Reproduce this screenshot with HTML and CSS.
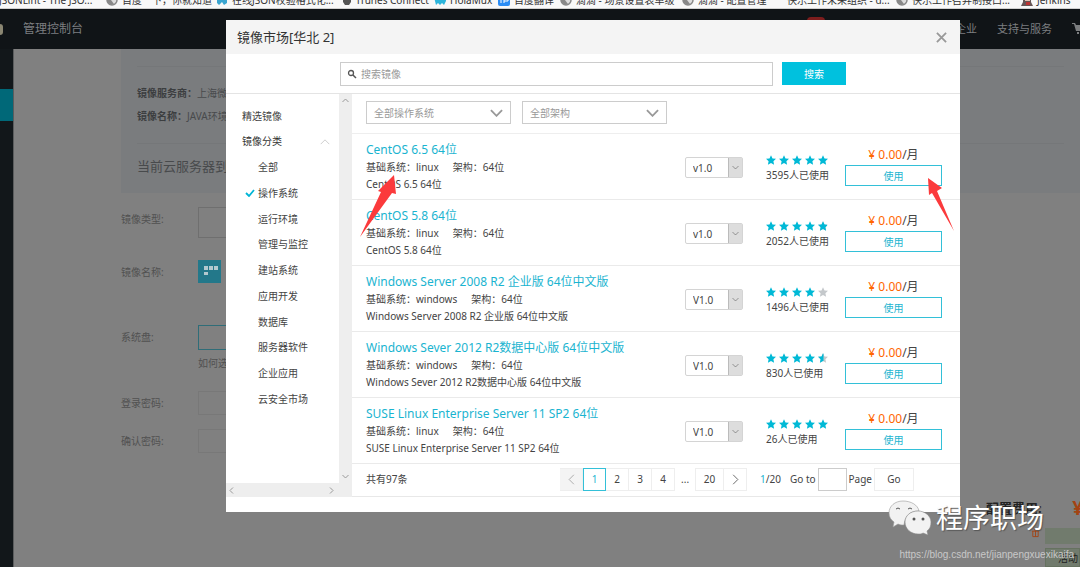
FILE: index.html
```html
<!DOCTYPE html>
<html lang="zh-CN">
<head>
<meta charset="utf-8">
<title>镜像市场</title>
<link rel="stylesheet" href="styles.css">
</head>
<body>
<svg class="defs" aria-hidden="true">
  <symbol id="star" viewBox="0 0 10 10"><path d="M5 .2 6.500 3.400 10 3.800 7.400 6.200 8.100 9.800 5 8 1.900 9.800 2.600 6.200 0 3.800 3.500 3.400Z"/></symbol>
  <symbol id="starhalf" viewBox="0 0 10 10"><path fill="#c4c8cb" d="M5 .2 6.500 3.400 10 3.800 7.400 6.200 8.100 9.800 5 8 1.900 9.800 2.600 6.200 0 3.800 3.500 3.400Z"/><path d="M5.500 1V8.300L5 8 1.900 9.800 2.600 6.200 0 3.800 3.500 3.400 5 .2Z"/></symbol>
  <symbol id="starmost" viewBox="0 0 10 10"><path fill="#c4c8cb" d="M5 .2 6.500 3.400 10 3.800 7.400 6.200 8.100 9.800 5 8 1.900 9.800 2.600 6.200 0 3.800 3.500 3.400Z"/><path d="M5 .2 6.500 3.400 9 3.700V4.700L7.400 6.200 8.100 9.800 5 8 1.900 9.800 2.600 6.200 0 3.800 3.500 3.400Z"/></symbol>
  <symbol id="globe" viewBox="0 0 12 12"><circle cx="6" cy="6" r="5" fill="#ddd" stroke="#888" stroke-width="1.500"/><path fill="#888" d="M1 5l4 1 3 4-3 1-4-3zM6 1l4 2v3L7 5z"/></symbol>
  <symbol id="chev" viewBox="0 0 14 8"><path d="M1 1 7 7 13 1" fill="none" stroke="currentColor"/></symbol>
</svg>

<nav class="bookmarks" aria-label="书签">
  <a href="#" style="left:-1px">JSONLint - The JSO...</a>
  <a href="#" style="left:106px"><svg><use href="#globe"/></svg>百度一下，你就知道</a>
  <a href="#" style="left:216px"><svg viewBox="0 0 12 12"><path fill="#3aa5d0" d="M1 3h4l1 3 1-3h4v6l-3 2-2-3-3 3-2-2z"/></svg>在线JSON校验格式化...</a>
  <a href="#" style="left:341px"><svg viewBox="0 0 12 12"><path fill="#555" d="M2 3h8v5l-2 3H4L2 8z"/></svg>iTunes Connect</a>
  <a href="#" style="left:434px"><svg viewBox="0 0 12 12"><path fill="#2cb5dc" d="M0 3h12v4l-2 4-2-2-2 2-2-2-2 2z"/></svg>HolaMux</a>
  <a href="#" style="left:498px"><svg viewBox="0 0 12 12"><rect width="12" height="12" rx="2" fill="#2b8df5"/><path d="M3 4v5M6 9V4h4v3H6" fill="none" stroke="#fff"/></svg>百度翻译</a>
  <a href="#" style="left:560px"><svg><use href="#globe"/></svg>滴滴 - 场景设置表单级</a>
  <a href="#" style="left:682px"><svg><use href="#globe"/></svg>滴滴 - 配置管理</a>
  <a href="#" style="left:787px">快乐工作未来组织 - d...</a>
  <a href="#" style="left:896px"><svg><use href="#globe"/></svg>快乐工作召弄制接口...</a>
  <a href="#" style="left:1021px"><svg viewBox="0 0 12 12"><path fill="#655" d="M2 1h8v7l2 4H0l2-4z"/><path fill="#e6c5b5" d="M4 2h5v5H4z"/><path fill="#b33" d="M5 8h4v3H5z"/></svg>Jenkins</a>
</nav>

<header class="topbar">
  <span class="logo"></span>
  <a href="#" class="console">管理控制台</a>
  <span class="hot"></span>
  <a href="#">企业</a>
  <a href="#">支持与服务</a>
  <svg class="cart" viewBox="0 0 14 12"><path fill="currentColor" d="M0 0h3l1 2h10l-2 6H4L2 1H0zM5 9h2v2H5zM10 9h2v2h-2z"/></svg>
</header>

<div class="shell">
  <aside class="rail"><span></span></aside>
  <main class="page">
    <section class="notice">
      <p><b>镜像服务商：</b>上海微科软件</p>
      <p><b>镜像名称：</b>JAVA环境镜像</p>
      <h2>当前云服务器到期时间</h2>
    </section>
    <form class="form">
      <label class="f1">镜像类型:<input type="text"></label>
      <div class="f2"><span>镜像名称:</span><i class="tile"><svg viewBox="0 0 14 10"><path fill="currentColor" d="M0 0h4v4H0zM0 6h4v3H0zM5 0h4v4H5zM10 0h4v4h-4z"/></svg></i></div>
      <label class="f3">系统盘:<input type="text"></label>
      <p class="hint">如何选择</p>
      <label class="f4">登录密码:<input type="password"></label>
      <label class="f4">确认密码:<input type="password"></label>
    </form>
  </main>
</div>

<aside class="cost">
  <div class="cost-line"><b>配置费用:</b><strong>¥</strong></div>
  <div class="cost-gift"><svg viewBox="0 0 10 10"><path fill="none" stroke="currentColor" d="M1 3h8M2 3v6h6V3M5 3v6M3 0l2 3 2-3"/></svg><span></span></div>
  <div class="cost-tip">活动</div>
</aside>

<section class="dialog" role="dialog" aria-labelledby="dlg">
  <header class="dialog-head">
    <h1 id="dlg">镜像市场[华北 2]</h1>
    <button type="button" aria-label="关闭"><svg viewBox="0 0 12 12"><path d="M1 1l10 10M11 1 1 11" fill="none" stroke="currentColor" stroke-width="2"/></svg></button>
  </header>
  <form class="search">
    <label class="searchbox">
      <svg viewBox="0 0 10 10"><circle cx="4" cy="4" r="2.500" fill="none" stroke="#555" stroke-width="1.300"/><path d="M6 6l3 3" stroke="#555" stroke-width="1.500"/></svg>
      <input type="text" placeholder="搜索镜像" aria-label="搜索镜像">
    </label>
    <button type="button">搜索</button>
  </form>
  <div class="body">
    <nav class="cats">
      <div class="cat-list">
        <a href="#">精选镜像</a>
        <a href="#" class="group">镜像分类<svg><use href="#chev"/></svg></a>
        <a href="#" class="sub">全部</a>
        <a href="#" class="sub on"><svg viewBox="0 0 10 8"><path d="M1 4l3 3 5-6" fill="none" stroke="#00b5d6" stroke-width="1.800"/></svg>操作系统</a>
        <a href="#" class="sub">运行环境</a>
        <a href="#" class="sub">管理与监控</a>
        <a href="#" class="sub">建站系统</a>
        <a href="#" class="sub">应用开发</a>
        <a href="#" class="sub">数据库</a>
        <a href="#" class="sub">服务器软件</a>
        <a href="#" class="sub">企业应用</a>
        <a href="#" class="sub">云安全市场</a>
      </div>
      <div class="vbar"><svg class="up"><use href="#chev"/></svg><svg><use href="#chev"/></svg></div>
      <div class="hbar"><svg class="left"><use href="#chev"/></svg><svg class="right"><use href="#chev"/></svg></div>
    </nav>
    <div class="main">
      <div class="filters">
        <span class="pick"><select aria-label="操作系统"><option>全部操作系统</option></select><svg><use href="#chev"/></svg></span>
        <span class="pick"><select aria-label="架构"><option>全部架构</option></select><svg><use href="#chev"/></svg></span>
      </div>
      <article class="row">
        <div class="info"><a href="#">CentOS 6.5 64位</a><p><span>基础系统：linux</span><span>架构：64位</span></p><p>CentOS 6.5 64位</p></div>
        <span class="ver"><select aria-label="版本"><option>v1.0</option></select><i><svg><use href="#chev"/></svg></i></span>
        <div class="rate"><div><svg><use href="#star"/></svg><svg><use href="#star"/></svg><svg><use href="#star"/></svg><svg><use href="#star"/></svg><svg><use href="#star"/></svg></div>3595人已使用</div>
        <div class="buy"><p><b>¥ 0.00</b>/月</p><button type="button">使用</button></div>
      </article>
      <article class="row">
        <div class="info"><a href="#">CentOS 5.8 64位</a><p><span>基础系统：linux</span><span>架构：64位</span></p><p>CentOS 5.8 64位</p></div>
        <span class="ver"><select aria-label="版本"><option>v1.0</option></select><i><svg><use href="#chev"/></svg></i></span>
        <div class="rate"><div><svg><use href="#star"/></svg><svg><use href="#star"/></svg><svg><use href="#star"/></svg><svg><use href="#star"/></svg><svg><use href="#starmost"/></svg></div>2052人已使用</div>
        <div class="buy"><p><b>¥ 0.00</b>/月</p><button type="button">使用</button></div>
      </article>
      <article class="row">
        <div class="info"><a href="#">Windows Server 2008 R2 企业版 64位中文版</a><p><span>基础系统：windows</span><span>架构：64位</span></p><p>Windows Server 2008 R2 企业版 64位中文版</p></div>
        <span class="ver"><select aria-label="版本"><option>V1.0</option></select><i><svg><use href="#chev"/></svg></i></span>
        <div class="rate"><div><svg><use href="#star"/></svg><svg><use href="#star"/></svg><svg><use href="#star"/></svg><svg><use href="#star"/></svg><svg class="off"><use href="#star"/></svg></div>1496人已使用</div>
        <div class="buy"><p><b>¥ 0.00</b>/月</p><button type="button">使用</button></div>
      </article>
      <article class="row">
        <div class="info"><a href="#">Windows Sever 2012 R2数据中心版 64位中文版</a><p><span>基础系统：windows</span><span>架构：64位</span></p><p>Windows Sever 2012 R2数据中心版 64位中文版</p></div>
        <span class="ver"><select aria-label="版本"><option>V1.0</option></select><i><svg><use href="#chev"/></svg></i></span>
        <div class="rate"><div><svg><use href="#star"/></svg><svg><use href="#star"/></svg><svg><use href="#star"/></svg><svg><use href="#star"/></svg><svg><use href="#starhalf"/></svg></div>830人已使用</div>
        <div class="buy"><p><b>¥ 0.00</b>/月</p><button type="button">使用</button></div>
      </article>
      <article class="row">
        <div class="info"><a href="#">SUSE Linux Enterprise Server 11 SP2 64位</a><p><span>基础系统：linux</span><span>架构：64位</span></p><p>SUSE Linux Enterprise Server 11 SP2 64位</p></div>
        <span class="ver"><select aria-label="版本"><option>V1.0</option></select><i><svg><use href="#chev"/></svg></i></span>
        <div class="rate"><div><svg><use href="#star"/></svg><svg><use href="#star"/></svg><svg><use href="#star"/></svg><svg><use href="#star"/></svg><svg><use href="#star"/></svg></div>26人已使用</div>
        <div class="buy"><p><b>¥ 0.00</b>/月</p><button type="button">使用</button></div>
      </article>
      <footer class="pager">
        <span class="total">共有97条</span>
        <button type="button" class="prev" aria-label="上一页"><svg class="left"><use href="#chev"/></svg></button>
        <button type="button" class="cur">1</button>
        <button type="button">2</button>
        <button type="button">3</button>
        <button type="button">4</button>
        <span class="dots">...</span>
        <button type="button" class="last">20</button>
        <button type="button" aria-label="下一页"><svg class="right"><use href="#chev"/></svg></button>
        <span class="count"><b>1</b>/20</span>
        <label class="goto">Go to<input type="text">Page</label>
        <button type="button" class="go">Go</button>
      </footer>
    </div>
  </div>
</section>

<svg class="arrow arrow-a" viewBox="0 0 36 64"><path fill="#fb3a3c" d="M0 63 21 18 18 17 34 1 36 20 32 19Z"/></svg>
<svg class="arrow arrow-b" viewBox="0 0 28 54"><path fill="#fb3a3c" d="M26 53 9 13 14 10 0 0 1 17 4 15Z"/></svg>

<div class="mark">
  <svg viewBox="0 0 44 36">
    <path fill="#f2f2f2" stroke="#999" stroke-width=".6" d="M15 1C7 1 1 6 1 13c0 4 2 7 5 9l-1 5 5-3c2 1 4 1 6 1C17 16 22 11 31 11 30 5 23 1 15 1Z"/>
    <path fill="#f2f2f2" stroke="#888" stroke-width=".6" d="M30 11c-8 0-13 5-13 11 0 7 6 12 13 12 2 0 4 0 5-1l5 2-1-4c3-2 4-5 4-9 0-6-6-11-13-11Z"/>
    <path fill="none" stroke="#555" d="M8 9q2-2 4 0M20 9q2-2 4 0"/>
    <circle cx="26" cy="19" r="1.500" fill="#555"/><circle cx="35" cy="19" r="1.500" fill="#555"/>
  </svg>
  <span>程序职场</span>
</div>
<div class="url">https://blog.csdn.net/jianpengxuexikaifa</div>
</body>
</html>
```

FILE: styles.css
```css
* { box-sizing: border-box; }
body {
  margin: 0;
  height: 100vh;
  display: flex;
  flex-direction: column;
  overflow: hidden;
  position: relative;
  background: #808080;
  color: #444;
  font: 10px/16px "Noto Sans", "Noto Sans CJK SC", sans-serif;
}
a { color: inherit; text-decoration: none; }
p, h1, h2 { margin: 0; font-weight: 400; }
button, input, select { font: inherit; color: inherit; margin: 0; padding: 0; border-radius: 0; }
button { background: none; border: 0; }
svg { display: block; fill: currentColor; flex: none; }
.defs { position: absolute; width: 0; height: 0; }
.left { transform: rotate(90deg); }
.right { transform: rotate(-90deg); }
.up { transform: rotate(180deg); }

.bookmarks { position: relative; height: 9px; flex: none; overflow: hidden; background: #f8f8f8; border-bottom: 1px solid #d0d0d0; color: #333; }
.bookmarks a { position: absolute; top: -8px; display: flex; align-items: center; gap: 4px; white-space: nowrap; }
.bookmarks svg { width: 12px; height: 12px; }

.topbar { height: 40px; flex: none; display: flex; align-items: center; gap: 20px; background: #101417; color: #7c7e80; font-size: 11px; overflow: hidden; }
.logo { width: 3px; height: 11px; background: #8a8672; border-radius: 0 4px 4px 0; }
.console { font-size: 12px; margin-right: auto; }
.hot { width: 18px; height: 16px; margin: 0 110px 8px 0; border-radius: 4px; background: #7d1d1d; }
.cart { width: 14px; height: 12px; margin-right: -6px; }

.shell { flex: 1; display: flex; min-height: 0; }
.rail { width: 14px; padding-top: 40px; background: #12171a; border-right: 1px solid #5a5c5d; }
.rail span { display: block; height: 32px; background: #006878; }
.page { flex: 1; padding-left: 107px; color: #515151; }
.notice { height: 144px; padding: 17px 16px 0; background: #7a7c7e; color: #484a4c; }
.notice p { height: 24px; padding-top: 3px; }
.notice p:first-child { border-top: 1px solid #757779; height: 36px; padding-top: 18px; }
.notice b { color: #3c3e40; }
.notice p + p { padding-top: 6px; height: 41px; }
.notice h2 { border-top: 1px solid #757779; padding-top: 13px; font-size: 13px; line-height: 18px; }
.form { width: 320px; padding-top: 14px; }
.form label, .f2 { display: flex; justify-content: space-between; line-height: 24px; }
.form input, .tile { width: 243px; height: 31px; border: 1px solid #6f6f6f; background: transparent; }
.form .f2 { height: 65px; margin-top: 22px; }
.form .tile { width: 23px; height: 23px; margin-right: 220px; border: 0; background: #23788a; color: #b3c9cf; padding: 6px 3px 0 6px; }
.form .f3 input { height: 25px; border-color: #2f6d78; }
.hint { padding: 5px 0 20px 77px; }
.form .f4 { margin-bottom: 14px; }
.form .f4 input { height: 24px; border-color: #787878; }

.dialog { position: absolute; left: 226px; right: 120px; top: 20px; background: #fff; }
.dialog-head { height: 34px; display: flex; align-items: center; justify-content: space-between; padding: 0 13px 0 11px; background: #f4f4f4; color: #333; }
.dialog-head h1 { font-size: 13px; line-height: 20px; }
.dialog-head button { color: #999; }
.dialog-head svg { width: 11px; height: 11px; }
.search { height: 40px; display: flex; align-items: center; gap: 9px; padding: 0 114px; border-bottom: 1px solid #e4e4e4; }
.searchbox { flex: 1; height: 24px; display: flex; align-items: center; gap: 4px; padding-left: 6px; border: 1px solid #ccc; }
.searchbox svg { width: 10px; height: 10px; }
.searchbox input { flex: 1; border: 0; outline: 0; }
::placeholder { color: #999; opacity: 1; }
.search button { width: 64px; height: 23px; background: #00c1de; color: #fff; }
.body { display: flex; padding-bottom: 15px; }
.cats { width: 126px; display: grid; grid-template-columns: 1fr 13px; grid-template-rows: 1fr 14px; }
.cat-list { padding: 9px 0 0 16px; color: #444; }
.cat-list a { display: flex; align-items: center; height: 26px; line-height: 25px; }
.cat-list a:nth-child(4n + 2) { height: 25px; }
.cat-list .group { justify-content: space-between; padding-right: 9px; color: #333; }
.group svg { width: 10px; height: 6px; color: #bbb; transform: rotate(180deg); }
.cat-list .sub { padding-left: 16px; }
.cat-list .on { padding-left: 3px; gap: 3px; }
.on svg { width: 10px; height: 8px; }
.vbar { background: #eee; display: flex; flex-direction: column; justify-content: space-between; align-items: center; padding: 4px 0; color: #999; }
.vbar svg, .hbar svg { width: 7px; height: 5px; stroke-width: 2; }
.hbar { grid-column: 1 / 3; background: #eee; display: flex; justify-content: space-between; align-items: center; padding: 0 17px 0 2px; color: #999; }

.main { flex: 1; border-bottom: 1px solid #e8e8e8; }
.filters { height: 40px; display: flex; gap: 11px; padding: 7px 14px; border-bottom: 1px solid #eee; }
.pick { width: 145px; height: 23px; position: relative; border: 1px solid #ccc; color: #999; }
select { appearance: none; background: transparent; border: 0; outline: 0; width: 100%; height: 100%; }
.pick select { padding-left: 7px; }
.pick svg { position: absolute; right: 7px; top: 7px; width: 13px; height: 8px; stroke-width: 2; pointer-events: none; }
.row { height: 66px; display: flex; padding: 7px 18px 0 14px; border-bottom: 1px solid #eaeaea; color: #444; }
.info { flex: 1; }
.info a { display: block; font-size: 12px; line-height: 18px; color: #1ab4d0; }
.info p { line-height: 17px; white-space: nowrap; }
.info p + p { line-height: 16px; }
.info span + span { margin-left: 14px; }
.ver { width: 58px; height: 21px; margin: 16px 23px 0 0; display: flex; border: 1px solid #d4d4d4; border-radius: 2px; }
.ver select { flex: 1; width: 42px; padding-left: 7px; }
.ver i { width: 14px; background: #ddd; border-left: 1px solid #bbb; display: flex; align-items: center; justify-content: center; color: #444; }
.ver svg { width: 7px; height: 5px; }
.rate { width: 79px; padding-top: 14px; }
.rate div { display: flex; gap: 3px; color: #00b9d6; height: 12px; }
.rate svg { width: 10px; height: 10px; }
.rate .off { color: #c4c8cb; }
.buy { width: 97px; text-align: center; padding-top: 4px; }
.buy p { font-size: 12px; line-height: 20px; }
.buy b { font-weight: 400; color: #f60; }
.buy button { width: 100%; height: 21px; border: 1px solid #33c0d8; color: #1ab4d0; }
.pager { height: 32px; display: flex; align-items: center; padding: 0 46px 2px 14px; }
.total { margin-right: auto; }
.pager button { width: 23px; height: 23px; border: 1px solid #eee; border-left: 0; display: flex; align-items: center; justify-content: center; }
.pager .prev { background: #f4f4f4; color: #999; }
.pager .cur { border: 1px solid #33c0d8; color: #1ab4d0; }
.pager button svg { width: 11px; height: 7px; }
.dots { width: 20px; text-align: center; }
.pager .last { width: 29px; border-left: 1px solid #eee; }
.count { margin: 0 9px 0 13px; }
.count b { font-weight: 400; color: #1ab4d0; }
.goto { display: flex; align-items: center; gap: 2px; }
.goto input { width: 29px; height: 23px; border: 1px solid #ccc; }
.pager .go { width: 40px; margin-left: 2px; border-left: 1px solid #eee; }

.arrow { position: absolute; pointer-events: none; }
.arrow-a { left: 360px; top: 174px; width: 36px; height: 64px; }
.arrow-b { left: 928px; top: 178px; width: 28px; height: 54px; }

.cost { position: absolute; right: 0; top: 498px; width: 94px; overflow: hidden; }
.cost-line { display: flex; justify-content: space-between; height: 30px; color: #222; font-size: 13px; line-height: 20px; }
.cost-line strong { font-size: 19px; color: #a34313; margin-right: -3px; }
.cost-gift { display: flex; gap: 5px; justify-content: flex-end; color: #a34313; }
.cost-gift svg { width: 9px; height: 10px; }
.cost-gift span, .cost-tip { width: 35px; height: 16px; background: #717b6d; }
.cost-tip { margin: 4px 0 0 59px; height: 19px; padding-left: 12px; line-height: 19px; color: #222; white-space: nowrap; border: 1px solid #667260; }
.mark { position: absolute; right: 36px; top: 500px; display: flex; align-items: center; gap: 4px; color: #fff; }
.mark svg { width: 44px; height: 36px; }
.mark span { font-size: 27px; line-height: 36px; text-shadow: 1px 1px 1px #555; }
.url { position: absolute; right: 6px; bottom: 4px; color: #c8c8c8; font: 10px/16px "Liberation Sans", sans-serif; }
```
